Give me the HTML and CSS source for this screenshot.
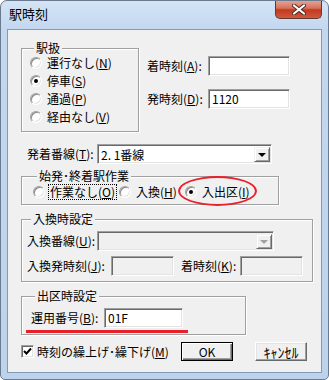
FILE: index.html
```html
<!DOCTYPE html>
<html lang="ja">
<head>
    <meta charset="UTF-8">
    <title>駅時刻</title>
    <link rel="stylesheet" href="styles.css">
</head>
<body>
    <div class="window">
        <div class="titlebar">
            <span class="title">駅時刻</span>
            <span class="close">
                <svg width="14" height="11" viewBox="0 0 14 11">
                    <path d="M2 1.5 L12 9.5 M12 1.5 L2 9.5" stroke="#4a2a26" stroke-width="4" stroke-linecap="round"/>
                    <path d="M2 1.5 L12 9.5 M12 1.5 L2 9.5" stroke="#fff" stroke-width="2.2" stroke-linecap="round"/>
                </svg>
            </span>
        </div>

        <div class="client">
            <!-- 駅扱 と 時刻 -->
            <div class="top">
                <fieldset class="group g-station">
                    <legend>駅扱</legend>
                    <div class="radio"><span class="dot"></span><span class="rtext">運行なし(<u>N</u>)</span></div>
                    <div class="radio"><span class="dot on"></span><span class="rtext">停車(<u>S</u>)</span></div>
                    <div class="radio"><span class="dot"></span><span class="rtext">通過(<u>P</u>)</span></div>
                    <div class="radio"><span class="dot"></span><span class="rtext">経由なし(<u>V</u>)</span></div>
                </fieldset>
                <div class="times">
                    <div class="field">
                        <span class="lbl w-time">着時刻(<u>A</u>):</span>
                        <span class="edit w-81"></span>
                    </div>
                    <div class="field">
                        <span class="lbl w-time">発時刻(<u>D</u>):</span>
                        <span class="edit w-81">1120</span>
                    </div>
                </div>
            </div>

            <!-- 発着番線 -->
            <div class="field line-row">
                <span class="lbl w-line">発着番線(<u>T</u>):</span>
                <span class="combo w-175">
                    <span class="combo-text">2. 1番線</span>
                    <span class="combo-btn"><span class="arrow"></span></span>
                </span>
            </div>

            <!-- 始発・終着駅作業 -->
            <fieldset class="group g-work">
                <legend>始発･終着駅作業</legend>
                <div class="work-row">
                    <div class="radio opt-1"><span class="dot"></span><span class="rtext focus">作業なし(<u>O</u>)</span></div>
                    <div class="radio opt-2"><span class="dot"></span><span class="rtext">入換(<u>H</u>)</span></div>
                    <div class="radio opt-3">
                        <span class="dot on"></span><span class="rtext">入出区(<u>I</u>)</span>
                        <span class="mark-ellipse"></span>
                    </div>
                </div>
            </fieldset>

            <!-- 入換時設定 -->
            <fieldset class="group g-swap">
                <legend>入換時設定</legend>
                <div class="field">
                    <span class="lbl w-line">入換番線(<u>U</u>):</span>
                    <span class="combo w-177 disabled">
                        <span class="combo-text"></span>
                        <span class="combo-btn"><span class="arrow"></span></span>
                    </span>
                </div>
                <div class="field swap-times">
                    <span class="lbl w-swap">入換発時刻(<u>J</u>):</span>
                    <span class="edit w-63 disabled"></span>
                    <span class="lbl w-arr">着時刻(<u>K</u>):</span>
                    <span class="edit w-63 disabled"></span>
                </div>
            </fieldset>

            <!-- 出区時設定 -->
            <fieldset class="group g-out">
                <legend>出区時設定</legend>
                <div class="field">
                    <span class="lbl w-op">運用番号(<u>B</u>):</span>
                    <span class="edit w-79">01F</span>
                </div>
                <div class="mark-line"></div>
            </fieldset>

            <!-- 下段 -->
            <div class="bottom">
                <span class="check">
                    <svg width="9" height="9" viewBox="0 0 9 9">
                        <path d="M1 4 L3.5 6.5 L8 1.5" stroke="#000" stroke-width="2" fill="none"/>
                    </svg>
                </span>
                <span class="check-text">時刻の繰上げ･繰下げ(<u>M</u>)</span>
                <span class="btn default">OK</span>
                <span class="btn btn-kana">ｷｬﾝｾﾙ</span>
            </div>
        </div>
    </div>
</body>
</html>
```

FILE: styles.css
```css
/* ウィンドウ枠 */
body {
    margin: 0;
    font-family: "Noto Sans CJK JP", sans-serif;
    font-size: 12px;
    line-height: 14px;
    color: #000;
    background: #fff;
}
.window {
    width: 329px;
    height: 380px;
    box-sizing: border-box;
    border: 1px solid #6b7b8f;
    border-radius: 7px 7px 5px 5px;
    background: linear-gradient(180deg, #d4e4f5 0, #c3d8ef 28px, #bdd3ec 100%);
    display: flex;
    flex-direction: column;
    overflow: hidden;
}
.titlebar {
    height: 28px;
    display: flex;
    align-items: flex-start;
}
.title {
    padding: 6px 0 0 8px;
    font-size: 13px;
}
.close {
    margin: -1px 6px 0 auto;
    width: 47px;
    height: 19px;
    box-sizing: border-box;
    border: 1px solid #5e3a34;
    border-top: none;
    border-radius: 0 0 5px 5px;
    background: linear-gradient(180deg, #e8a897 0, #d7735d 45%, #c2391f 55%, #d4583b 100%);
    display: flex;
    align-items: center;
    justify-content: center;
}

/* クライアント領域 */
.client {
    margin: 0 6px 6px;
    flex: 1;
    border: 1px solid #8499b4;
    background: #f0f0f0;
}

/* グループボックス */
.group {
    margin: 0 0 0 13px;
    padding: 0;
    min-width: 0;
    box-sizing: border-box;
    border: 1px solid #a0a0a0;
    box-shadow: inset 1px 1px 0 #fff, 1px 1px 0 #fff;
}
.group legend {
    margin-left: 4px;
    padding: 0 2px;
    height: 12px;
    line-height: 12px;
    background: #f0f0f0;
}

/* ラジオボタン */
.radio {
    display: flex;
    align-items: center;
    height: 18px;
}
.dot {
    position: relative;
    width: 12px;
    height: 12px;
    flex: none;
    box-sizing: border-box;
    border-radius: 50%;
    background: #fff;
    border: 1px solid;
    border-color: #a0a0a0 #fff #fff #a0a0a0;
    box-shadow: inset 1px 1px 0 #8a8a8a, inset -1px -1px 0 #e3e3e3;
}
.dot.on::after {
    content: "";
    position: absolute;
    left: 3px;
    top: 3px;
    width: 4px;
    height: 4px;
    border-radius: 50%;
    background: #000;
}
.rtext {
    margin-left: 4px;
    padding: 0 1px;
    white-space: nowrap;
}
.focus {
    outline: 1px dotted #000;
    outline-offset: 0;
}

/* 入力欄 */
.field {
    display: flex;
    align-items: center;
    height: 20px;
}
.lbl {
    white-space: nowrap;
    flex: none;
}
.edit {
    height: 20px;
    box-sizing: border-box;
    background: #fff;
    border: 1px solid;
    border-color: #a0a0a0 #fff #fff #a0a0a0;
    box-shadow: inset 1px 1px 0 #696969, inset -1px -1px 0 #e3e3e3;
    padding: 0 3px;
    display: flex;
    align-items: center;
}
.edit.disabled {
    background: #f0f0f0;
}
.combo {
    height: 20px;
    box-sizing: border-box;
    background: #fff;
    border: 1px solid;
    border-color: #a0a0a0 #fff #fff #a0a0a0;
    box-shadow: inset 1px 1px 0 #696969, inset -1px -1px 0 #e3e3e3;
    padding: 2px 1px 1px 2px;
    display: flex;
}
.combo.disabled {
    background: #f0f0f0;
}
.combo-text {
    flex: 1;
    padding-left: 1px;
    line-height: 16px;
}
.combo-btn {
    width: 16px;
    box-sizing: border-box;
    background: #f0f0f0;
    border: 1px solid;
    border-color: #f0f0f0 #696969 #696969 #f0f0f0;
    box-shadow: inset 1px 1px 0 #fff, inset -1px -1px 0 #a0a0a0;
    display: flex;
    align-items: center;
    justify-content: center;
}
.arrow {
    width: 0;
    height: 0;
    border-left: 4px solid transparent;
    border-right: 4px solid transparent;
    border-top: 4px solid #000;
    margin-top: 1px;
}
.disabled .arrow {
    border-top-color: #a0a0a0;
}

.w-time { width: 61px; }
.w-line { width: 70px; }
.w-swap { width: 84px; }
.w-arr { width: 59px; margin-left: 7px; }
.w-op { width: 73px; }
.w-81 { width: 82px; }
.w-79 { width: 79px; }
.w-63 { width: 63px; }
.w-175 { width: 175px; }
.w-177 { width: 177px; }

/* 上段 */
.top {
    display: flex;
    margin-top: 12px;
}
.g-station {
    width: 118px;
    padding: 0 0 5px 8px;
}
.times {
    margin-left: 8px;
    padding-top: 14px;
    display: flex;
    flex-direction: column;
    gap: 13px;
}

.line-row {
    margin: 12px 0 0 19px;
}

/* 始発・終着駅作業 */
.g-work {
    width: 258px;
    margin-top: 6px;
    padding: 1px 0 3px 11px;
}
.work-row {
    display: flex;
}
.opt-1 { width: 86px; }
.opt-2 { width: 66px; }
.opt-3 { position: relative; }
.mark-ellipse {
    position: absolute;
    left: -7px;
    top: -7px;
    width: 79px;
    height: 30px;
    box-sizing: border-box;
    border: 2px solid #e8202a;
    border-radius: 50%;
}

/* 入換時設定 */
.g-swap {
    width: 292px;
    margin-top: 8px;
    padding: 6px 0 5px 5px;
}
.swap-times {
    margin-top: 5px;
}

/* 出区時設定 */
.g-out {
    width: 225px;
    margin-top: 8px;
    padding: 6px 0 1px 9px;
}
.mark-line {
    margin: 2px 0 0 -5px;
    width: 162px;
    height: 3px;
    background: #e8202a;
}

/* 下段 */
.bottom {
    display: flex;
    align-items: center;
    margin: 7px 0 0 13px;
    height: 19px;
}
.check {
    width: 13px;
    height: 13px;
    box-sizing: border-box;
    background: #fff;
    border: 1px solid;
    border-color: #a0a0a0 #fff #fff #a0a0a0;
    box-shadow: inset 1px 1px 0 #696969, inset -1px -1px 0 #e3e3e3;
    display: flex;
    align-items: center;
    justify-content: center;
}
.check-text {
    width: 144px;
    margin-left: 3px;
    white-space: nowrap;
}
.btn {
    width: 52px;
    height: 19px;
    box-sizing: border-box;
    background: #f0f0f0;
    border: 1px solid;
    border-color: #fff #696969 #696969 #fff;
    box-shadow: inset -1px -1px 0 #a0a0a0, inset 1px 1px 0 #e3e3e3;
    display: flex;
    align-items: center;
    justify-content: center;
    margin-left: 22px;
}
.btn.default {
    margin-left: 0;
    border-color: #000;
    box-shadow: inset 1px 1px 0 #fff, inset -1px -1px 0 #696969, inset -2px -2px 0 #a0a0a0;
}
.btn-kana {
    font-size: 14px;
}
```
